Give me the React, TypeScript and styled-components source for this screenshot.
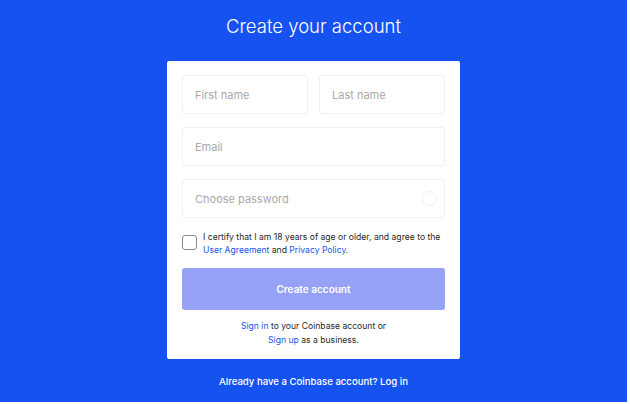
import React from "react"
import styled, { createGlobalStyle } from "styled-components"

const GlobalStyle = createGlobalStyle`
    html, body {
        margin: 0;
        padding: 0;
        background: #ffffff;
    }
    * {
        box-sizing: border-box;
    }
`;

const SignUp = () => {
    return (
        <Page>
            <GlobalStyle />
            <Title>Create your account</Title>
            <Card>
                <Row>
                    <Field placeholder="First name" />
                    <Field placeholder="Last name" />
                </Row>
                <Field placeholder="Email" />
                <PasswordBox>
                    <Field placeholder="Choose password" type="password" />
                    <Strength />
                </PasswordBox>
                <Certify>
                    <Check type="checkbox" />
                    <CertifyText>
                        I certify that I am 18 years of age or older, and agree to the{" "}
                        <Link>User Agreement</Link> and <Link>Privacy Policy</Link>.
                    </CertifyText>
                </Certify>
                <Submit>Create account</Submit>
                <Alt>
                    <Link>Sign in</Link> to your Coinbase account or
                    <br />
                    <Link>Sign up</Link> as a business.
                </Alt>
            </Card>
            <Footer>Already have a Coinbase account? Log in</Footer>
        </Page>
    );
}

const Page = styled.div`
    width: 627px;
    height: 402px;
    background-color: #1652f0;
    display: flex;
    flex-direction: column;
    align-items: center;
    font-family: Inter, "Liberation Sans", sans-serif;
`;
const Title = styled.h1`
    margin: 14px 0 0 0;
    font-size: 18.5px;
    line-height: 24px;
    font-weight: 300;
    color: #ffffff;
`;
const Card = styled.div`
    margin-top: 23px;
    width: 293px;
    background-color: #ffffff;
    border-radius: 2px;
    padding: 14px 15px 12px 15px;
    display: flex;
    flex-direction: column;
    gap: 13px;
`;
const Row = styled.div`
    display: flex;
    gap: 11px;
`;
const Field = styled.input`
    width: 100%;
    min-width: 0;
    height: 39px;
    border: 1px solid #f0f0f0;
    border-radius: 3px;
    padding: 0 12px;
    font-family: Inter, "Liberation Sans", sans-serif;
    font-size: 11px;
    color: #333;
    outline: none;
    &::placeholder {
        color: #a9a9a9;
    }
`;
const PasswordBox = styled.div`
    position: relative;
`;
const Strength = styled.div`
    position: absolute;
    right: 8px;
    top: 12px;
    width: 15px;
    height: 15px;
    border-radius: 50%;
    border: 1px solid #f0f0f0;
`;
const Certify = styled.div`
    display: flex;
    align-items: flex-start;
    gap: 6px;
`;
const Check = styled.input`
    appearance: none;
    flex: none;
    width: 15px;
    height: 15px;
    margin: 4px 0 0 0;
    border: 1px solid #8a8a8a;
    border-radius: 3px;
    background: #fff;
`;
const CertifyText = styled.p`
    margin: 0;
    font-size: 8.6px;
    line-height: 13px;
    color: #1f1f1f;
`;
const Link = styled.a`
    color: #1652f0;
    cursor: pointer;
`;
const Submit = styled.button`
    height: 42px;
    margin-top: -2px;
    border: none;
    border-radius: 3px;
    background-color: #95a2f5;
    color: #ffffff;
    font-family: Inter, "Liberation Sans", sans-serif;
    font-size: 10px;
    font-weight: 600;
`;
const Alt = styled.p`
    margin: -4px 0 0 0;
    text-align: center;
    font-size: 8.6px;
    line-height: 14px;
    color: #1f1f1f;
`;
const Footer = styled.p`
    margin: 17px 0 0 0;
    font-size: 9.6px;
    font-weight: 500;
    color: #ffffff;
`;

export default SignUp;
